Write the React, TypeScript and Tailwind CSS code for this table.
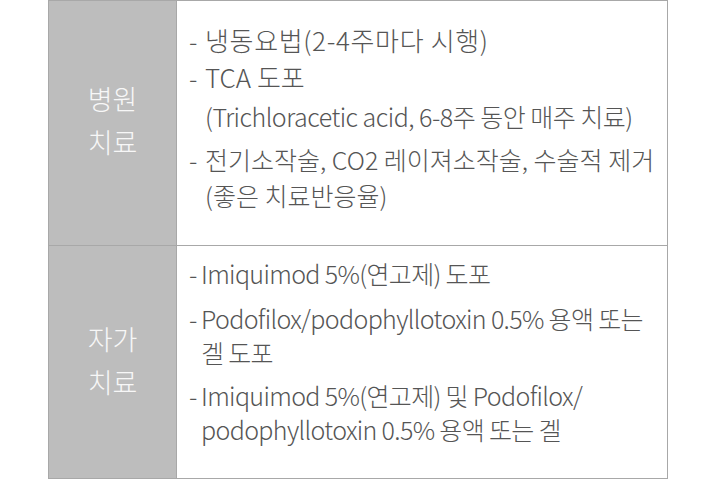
import React from "react";

const font = { fontFamily: '"Noto Sans CJK KR", "Noto Sans", sans-serif' };

export default function App() {
  return (
    <div className="w-[720px] h-[479px] bg-white" style={font}>
      <div className="ml-[48px] w-[620px] border border-[#a8a8a8] flex flex-col">
        <div className="flex h-[245px] border-b border-[#a8a8a8]">
          <div className="w-[128px] shrink-0 bg-[#bdbdbd] border-r border-[#a8a8a8] flex flex-col items-center justify-center text-[27px] leading-[43px] text-[#f7f7f7] font-light pb-[6px]">
            <span>병원</span>
            <span>치료</span>
          </div>
          <div className="flex-1 flex flex-col justify-center pl-[12px] pb-[11px] text-[25px] leading-[36px] text-[#555] font-light">
            <div className="flex">
              <span className="w-[16px] shrink-0">-</span>
              <span className="text-[26px] tracking-[0.025em]">냉동요법(2-4주마다 시행)</span>
            </div>
            <div className="flex mt-[1px]">
              <span className="w-[16px] shrink-0">-</span>
              <div className="flex flex-col">
                <span className="text-[26px]">TCA 도포</span>
                <span className="mt-[3px] tracking-[-0.02em]">(Trichloracetic acid, 6-8주 동안 매주 치료)</span>
              </div>
            </div>
            <div className="flex mt-[7px]">
              <span className="w-[16px] shrink-0">-</span>
              <div className="flex flex-col">
                <span>전기소작술, CO2 레이져소작술, 수술적 제거</span>
                <span>(좋은 치료반응율)</span>
              </div>
            </div>
          </div>
        </div>
        <div className="flex h-[232px]">
          <div className="w-[128px] shrink-0 bg-[#bdbdbd] border-r border-[#a8a8a8] flex flex-col items-center justify-center text-[27px] leading-[43px] text-[#f7f7f7] font-light pb-[4px]">
            <span>자가</span>
            <span>치료</span>
          </div>
          <div className="flex-1 flex flex-col justify-center pl-[12px] pb-[22px] text-[25px] leading-[34px] text-[#555] font-light tracking-[-0.026em]">
            <div className="flex">
              <span className="w-[12px] shrink-0">-</span>
              <span>Imiquimod 5%(연고제) 도포</span>
            </div>
            <div className="flex mt-[11px]">
              <span className="w-[12px] shrink-0">-</span>
              <div className="flex flex-col">
                <span>Podofilox/podophyllotoxin 0.5% 용액 또는</span>
                <span>겔 도포</span>
              </div>
            </div>
            <div className="flex mt-[9px]">
              <span className="w-[12px] shrink-0">-</span>
              <div className="flex flex-col">
                <span>Imiquimod 5%(연고제) 및 Podofilox/</span>
                <span>podophyllotoxin 0.5% 용액 또는 겔</span>
              </div>
            </div>
          </div>
        </div>
      </div>
    </div>
  );
}
